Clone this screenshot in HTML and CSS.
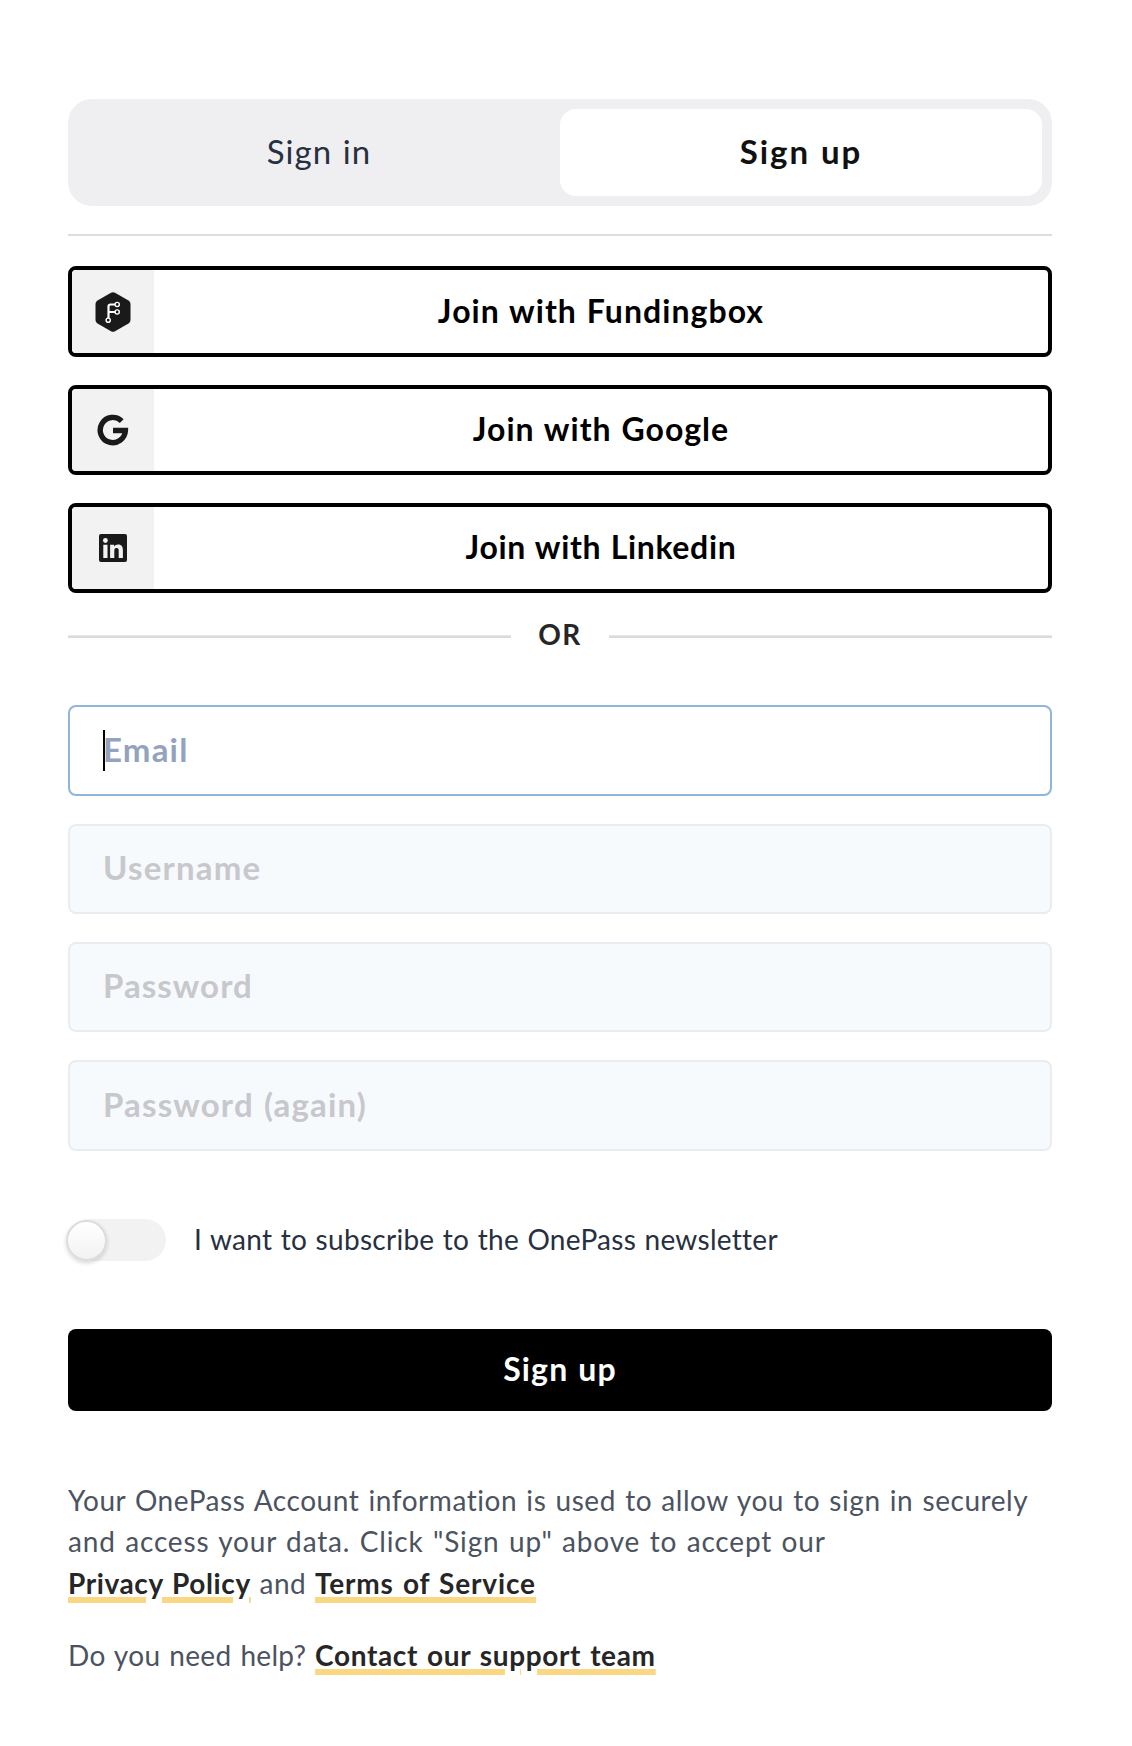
FILE: index.html
```html
<!DOCTYPE html>
<html lang="en">
<head>
<meta charset="utf-8">
<title>OnePass – Sign up</title>
<link rel="stylesheet" href="styles.css">
</head>
<body>
<main class="panel">
  <nav class="tabs">
    <a class="tab"><span>Sign in</span></a>
    <a class="tab tab-active"><span>Sign up</span></a>
  </nav>
  <hr class="rule">
  <div class="providers">
    <button class="provider" type="button">
      <span class="provider-icon"><svg width="36" height="40" viewBox="0 0 36 40"><path d="M16 .8q2-1.100 4 0l13.500 7.700q2 1.200 2 3.500v16q0 2.300-2 3.500L20 39.200q-2 1.100-4 0L2.500 31.500q-2-1.200-2-3.500V12q0-2.300 2-3.500z" fill="#1a1a1a"/><g fill="none" stroke="#fff"><path stroke-width="2.200" d="M13.500 26V14.500q0-2 2-2H20M13.500 20H20"/><g stroke-width="1.400"><circle cx="22.200" cy="12.500" r="2.100"/><circle cx="22.200" cy="20" r="2.100"/><circle cx="13.200" cy="28.200" r="2.100"/></g></g></svg></span>
      <span class="provider-label"><span class="fundingbox">Join with Fundingbox</span></span>
    </button>
    <button class="provider" type="button">
      <span class="provider-icon"><svg width="32" height="32" viewBox="0 0 32 32"><path d="M24.700 7.100A12.600 12.600 0 1 0 28.400 16.500H16" fill="none" stroke="#1a1a1a" stroke-width="5.400"/></svg></span>
      <span class="provider-label"><span class="google">Join with Google</span></span>
    </button>
    <button class="provider" type="button">
      <span class="provider-icon"><svg width="28" height="28" viewBox="0 0 28 28"><rect width="28" height="28" rx="2" fill="#1a1a1a"/><circle cx="6.400" cy="6.500" r="2.400" fill="#f2f2f2"/><path d="M4.300 10.700h4.200V24H4.300zM11.100 10.700h4v1.800c.8-1.300 2.200-2.100 4-2.100 3.800 0 4.800 2.500 4.800 6V24h-4.200v-6.500c0-1.700-.1-3.400-2.100-3.400-2.100 0-2.300 1.700-2.300 3.300V24h-4.200z" fill="#f2f2f2"/></svg></span>
      <span class="provider-label"><span class="linkedin">Join with Linkedin</span></span>
    </button>
  </div>
  <div class="divider"><span>OR</span></div>
  <form class="form">
    <div class="field field-focus"><input class="email" type="email" placeholder="Email"><i class="caret"></i></div>
    <div class="field"><input class="username" type="text" placeholder="Username"></div>
    <div class="field"><input class="password" type="text" placeholder="Password"></div>
    <div class="field"><input class="password-again" type="text" placeholder="Password (again)"></div>
    <label class="newsletter"><span class="switch"><span class="knob"></span></span><span class="newsletter-label">I want to subscribe to the OnePass newsletter</span></label>
    <button class="submit" type="button"><span>Sign up</span></button>
  </form>
  <footer class="legal">
    <p><span class="usage">Your OnePass Account information is used to allow you to sign in securely</span><br><span class="consent">and access your data. Click "Sign up" above to accept our</span><br><a class="privacy">Privacy Policy</a> <span class="and">and</span> <a class="terms">Terms of Service</a></p>
    <p><span class="help">Do you need help?</span> <a class="contact">Contact our support team</a></p>
  </footer>
</main>
</body>
</html>
```
FILE: styles.css
```css
* { box-sizing: border-box; }

body {
  margin: 0;
  background: #fff;
  font-family: Lato, "Open Sans", sans-serif;
  color: #27303f;
}

.panel {
  width: 984px;
  margin: 0 0 0 68px;
  padding-top: 99px;
}

.tabs {
  display: grid;
  grid-template-columns: 1fr 1fr;
  height: 107px;
  padding: 10px;
  border-radius: 24px;
  background: #efeff1;
}

.tab {
  display: flex;
  align-items: center;
  justify-content: center;
  padding-bottom: 3px;
  border-radius: 16px;
  font-size: 33px;
  letter-spacing: 1.05px;
  word-spacing: 1px;
}

.tab-active {
  background: #fff;
  color: #111;
  font-weight: 700;
  letter-spacing: 1.93px;
}

.rule {
  height: 2px;
  margin: 28px 0 30px;
  border: 0;
  background: #ddd;
}

.providers {
  display: flex;
  flex-direction: column;
  gap: 28px;
}

.provider {
  display: flex;
  height: 90px;
  padding: 0;
  overflow: hidden;
  border: 4px solid #000;
  border-radius: 8px;
  background: #fff;
  color: #000;
  font: 700 32px Lato, sans-serif;
  word-spacing: 1px;
}

.provider:first-child { height: 91px; }

.provider-icon {
  display: flex;
  align-items: center;
  justify-content: center;
  width: 82px;
  height: 100%;
  background: #f2f2f2;
}

.provider-label {
  display: flex;
  flex: 1;
  align-items: center;
  justify-content: center;
  height: 100%;
  padding-bottom: 4px;
}

.provider:first-child .provider-label { padding-bottom: 3px; }

.fundingbox { letter-spacing: 1.05px; }
.google { letter-spacing: 1.02px; }
.linkedin { letter-spacing: .66px; }

.divider {
  display: flex;
  align-items: center;
  gap: 27px;
  height: 56px;
  margin-top: 14px;
  padding-top: 2px;
  font-size: 28px;
  font-weight: 700;
  color: #262626;
}

.divider span {
  width: 44px;
  padding-bottom: 5px;
  text-align: center;
  letter-spacing: 1.5px;
}

.divider::before,
.divider::after {
  content: "";
  flex: 1;
  height: 2px;
  border-top: 1px solid #e8e8e8;
  background: #dadada;
}

.form {
  display: flex;
  flex-direction: column;
  gap: 28px;
  margin-top: 42px;
}

.field {
  position: relative;
  height: 90px;
}

.field:first-child,
.field:nth-child(4) { height: 91px; }

.field input {
  display: block;
  width: 100%;
  height: 100%;
  padding: 0 33px 4px;
  border: 2px solid #e9edf1;
  border-radius: 8px;
  outline: 0;
  background: #f6fafd;
  font: 700 33px Lato, sans-serif;
  word-spacing: 1px;
}

.field input::placeholder { color: #c8c7cc; }
.field .email { letter-spacing: 1.2px; }
.field .username { letter-spacing: 1.2px; }
.field .password { letter-spacing: 1.05px; }
.field .password-again { letter-spacing: 1.17px; }

.field-focus input {
  border-color: #8fb6d8;
  background: #fff;
}

.field-focus input::placeholder { color: #94a3bd; }

.caret {
  position: absolute;
  top: 25px;
  left: 35px;
  width: 2px;
  height: 41px;
  background: #000;
}

.newsletter {
  display: flex;
  align-items: center;
  gap: 28px;
  height: 42px;
  margin-top: 40px;
  font-size: 28px;
}

.newsletter-label {
  padding-bottom: 3px;
  letter-spacing: .28px;
  word-spacing: 1px;
}

.switch {
  display: flex;
  align-items: center;
  width: 98px;
  height: 42px;
  border-radius: 21px;
  background: #f2f2f2;
}

.knob {
  width: 41px;
  height: 41px;
  margin-left: -2px;
  border: 2px solid #dcdcdc;
  border-radius: 50%;
  background: linear-gradient(#fff, #f2f2f2);
  box-shadow: 0 2px 4px rgba(0, 0, 0, .16);
}

.submit {
  height: 82px;
  margin-top: 40px;
  padding: 0 0 4px;
  border: 0;
  border-radius: 8px;
  background: #000;
  color: #fff;
  font: 700 32px Lato, sans-serif;
  letter-spacing: 1.15px;
  word-spacing: 1px;
}

.legal {
  margin-top: 68.5px;
  font-size: 28px;
  line-height: 41.5px;
  color: #4b5361;
  white-space: nowrap;
  word-spacing: 1.5px;
}

.legal p { margin: 0 0 31px; }

.usage { letter-spacing: .55px; }
.consent { letter-spacing: .83px; }
.and { letter-spacing: .5px; }
.help { letter-spacing: .31px; }
.privacy { letter-spacing: .61px; }
.terms { letter-spacing: .86px; }
.contact { letter-spacing: .66px; }

.legal a {
  color: #262626;
  font-weight: 700;
  text-decoration: underline 6px #fad883;
  text-underline-offset: 3px;
}
```
